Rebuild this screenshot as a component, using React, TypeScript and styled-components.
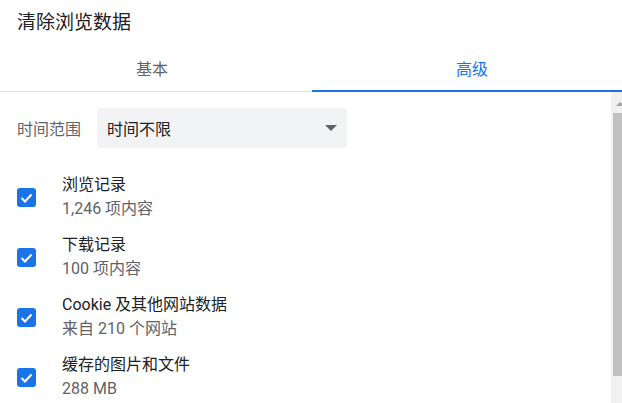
import React from 'react';
import styled, { createGlobalStyle } from 'styled-components';

const GlobalStyle = createGlobalStyle`
  body {
    margin: 0;
    overflow: hidden;
    background: #ffffff;
    font-family: Roboto, "Noto Sans CJK SC", sans-serif;
  }
`;

const Dialog = styled.div`
  width: 622px;
  height: 403px;
  display: flex;
  flex-direction: column;
  background: #ffffff;
  overflow: hidden;
`;

const Title = styled.h1`
  margin: 0;
  padding: 11px 17px 0;
  height: 24px;
  font-size: 19px;
  font-weight: 400;
  line-height: 24px;
  color: #202124;
`;

const TabBar = styled.div`
  display: flex;
  height: 48px;
  margin-top: 9px;
  box-sizing: border-box;
  border-bottom: 1px solid #e0e0e0;
`;

const Tab = styled.div<{ $active?: boolean }>`
  position: relative;
  flex: 1;
  display: flex;
  align-items: center;
  justify-content: center;
  font-size: 16px;
  color: ${({ $active }) => ($active ? '#1a73e8' : '#5f6368')};

  &:first-child {
    flex: 0 0 312px;
    box-sizing: border-box;
    padding-right: 8px;
  }

  &:last-child {
    padding-left: 10px;
  }

  &::after {
    content: '';
    display: ${({ $active }) => ($active ? 'block' : 'none')};
    position: absolute;
    left: 0;
    right: 0;
    bottom: -1px;
    height: 2px;
    background: #1a73e8;
  }
`;

const Body = styled.div`
  flex: 1;
  display: flex;
  min-height: 0;
`;

const Content = styled.div`
  flex: 1;
  padding: 16px 0 0 17px;
`;

const RangeRow = styled.div`
  display: flex;
  align-items: center;
  gap: 16px;
`;

const Label = styled.span`
  font-size: 16px;
  color: #5f6368;
`;

const Select = styled.div`
  width: 250px;
  height: 40px;
  box-sizing: border-box;
  padding: 0 10px;
  display: flex;
  align-items: center;
  justify-content: space-between;
  border-radius: 4px;
  background: #f1f3f4;
  font-size: 16px;
  color: #202124;
`;

const Caret = styled.span`
  width: 0;
  height: 0;
  border-left: 6px solid transparent;
  border-right: 6px solid transparent;
  border-top: 6px solid #5f6368;
`;

const List = styled.div`
  margin-top: 25px;
  display: flex;
  flex-direction: column;
  gap: 12px;
`;

const Row = styled.div`
  display: flex;
  align-items: center;
  gap: 26px;
`;

const Box = styled.span`
  width: 19px;
  height: 19px;
  flex: none;
  border-radius: 3px;
  background: #1a73e8;
  display: flex;
`;

const Texts = styled.div`
  display: flex;
  flex-direction: column;
  font-size: 16px;
  line-height: 24px;
`;

const Primary = styled.span`
  color: #202124;
`;

const Secondary = styled.span`
  color: #5f6368;
`;

const Scrollbar = styled.div`
  width: 11px;
  flex: none;
  display: flex;
  flex-direction: column;
  background: #f1f1f1;
  overflow: hidden;
`;

const ArrowButton = styled.div`
  height: 21px;
  flex: none;
  box-sizing: border-box;
  padding: 10px 0 0 5px;
`;

const ArrowUp = styled.span`
  display: block;
  width: 0;
  height: 0;
  border-left: 4px solid transparent;
  border-right: 4px solid transparent;
  border-bottom: 4px solid #a3a3a3;
`;

const Thumb = styled.div`
  height: 263px;
  margin-left: 2px;
  background: #c1c1c1;
`;

const items = [
  { title: '浏览记录', detail: '1,246 项内容' },
  { title: '下载记录', detail: '100 项内容' },
  { title: 'Cookie 及其他网站数据', detail: '来自 210 个网站' },
  { title: '缓存的图片和文件', detail: '288 MB' },
];

const CheckBox: React.FC = () => (
  <Box>
    <svg width="19" height="19" viewBox="0 0 19 19">
      <path d="M4.5 10 L8 13.5 L14.5 6.5" fill="none" stroke="#ffffff" strokeWidth="2" />
    </svg>
  </Box>
);

const App: React.FC = () => {
  return (
    <>
      <GlobalStyle />
      <Dialog>
        <Title>清除浏览数据</Title>
        <TabBar>
          <Tab>基本</Tab>
          <Tab $active>高级</Tab>
        </TabBar>
        <Body>
          <Content>
            <RangeRow>
              <Label>时间范围</Label>
              <Select>
                时间不限
                <Caret />
              </Select>
            </RangeRow>
            <List>
              {items.map((item) => (
                <Row key={item.title}>
                  <CheckBox />
                  <Texts>
                    <Primary>{item.title}</Primary>
                    <Secondary>{item.detail}</Secondary>
                  </Texts>
                </Row>
              ))}
            </List>
          </Content>
          <Scrollbar>
            <ArrowButton>
              <ArrowUp />
            </ArrowButton>
            <Thumb />
          </Scrollbar>
        </Body>
      </Dialog>
    </>
  );
};

export default App;
